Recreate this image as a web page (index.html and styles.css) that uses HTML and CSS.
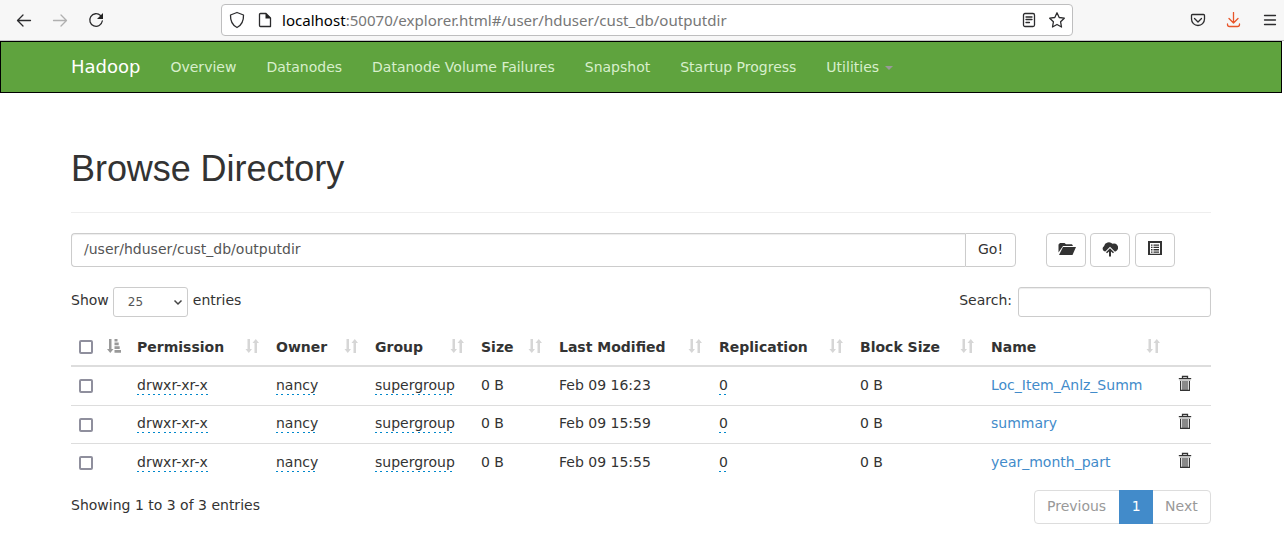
FILE: index.html
```html
<!DOCTYPE html>
<html lang="en">
<head>
<meta charset="utf-8">
<title>Browsing HDFS</title>
<link rel="stylesheet" href="styles.css">
</head>
<body>
<svg class="defs" width="0" height="0">
  <symbol id="sort" viewBox="0 0 14 14"><path d="M2.500 0h2.500v10H7L3.750 14 .5 10h2zM9.500 14h2.500V4h2L10.750 0 7.500 4h2z"/></symbol>
  <symbol id="sort-asc" viewBox="0 0 14 14"><path d="M2 0h2.500v10H6.500L3.250 14 0 10h2zM7.500 0h3v2.500h-3zM7.500 3.600h4.200v2.600H7.500zM7.500 7.300h5.200v2.600H7.500zM7.500 11H14v2.700H7.500z"/></symbol>
  <symbol id="trash" viewBox="0 0 14 16"><path d="M4.500 3V1.500h5V3" fill="none" stroke="currentColor" stroke-width="1.300"/><path d="M.8 3h12.400v1.200H.8z" fill="currentColor"/><path d="M1.500 4.200h11v1.600h-11z" fill="#bbb"/><path d="M2.600 6v9.400h8.800V6M5 6v9M7 6v9M9 6v9" fill="none" stroke="currentColor" stroke-width="1.150"/></symbol>
</svg>

<div class="browser">
  <div class="nav-buttons">
    <svg width="16" height="16" viewBox="0 0 16 16"><path d="M14.500 8.500H2M7 3 1.500 8.500 7 14"/></svg>
    <svg class="dim" width="16" height="16" viewBox="0 0 16 16"><path d="M1.500 8.500h12.500M9 3l5.500 5.500L9 14"/></svg>
    <svg width="16" height="16" viewBox="0 0 16 16"><path d="M12.500 3.500A6.300 6.300 0 1 0 14.300 9"/><path class="solid" d="M15 1v6H9z"/></svg>
  </div>
  <div class="address">
    <svg width="16" height="18" viewBox="0 0 16 18"><path d="M8 1.500 14.500 4C14.700 9 13 14 8 16.500 3 14 1.300 9 1.500 4z"/></svg>
    <svg class="page-icon" width="14" height="16" viewBox="0 0 14 16"><path d="M2.500 1.500H8L12.500 6v8.500h-10a1 1 0 0 1-1-1v-11a1 1 0 0 1 1-1z"/><path class="solid" d="M7.500 1 13 6.500H7.500z"/></svg>
    <div class="url"><span class="host">localhost</span>:50070/explorer.html#/user/hduser/cust_db/outputdir</div>
    <svg class="reader" width="14" height="16" viewBox="0 0 14 16"><rect x="1.500" y="1.500" width="11" height="13" rx="1.500"/><path d="M4 5h6M4 7.500h6M4 10.500h3.500"/></svg>
    <svg width="18" height="18" viewBox="0 0 18 18"><path d="m9 1.800 2.200 4.700 5.100.7-3.700 3.600.9 5.200L9 13.500 4.500 16l.9-5.200L1.700 7.200l5.100-.7z"/></svg>
  </div>
  <div class="tools">
    <svg width="16" height="16" viewBox="0 0 16 16"><path d="M2.500 2.500h11a1 1 0 0 1 1 1V7a6.500 6.500 0 0 1-13 0V3.500a1 1 0 0 1 1-1zM4.500 6.500 8 10l3.500-3.500"/></svg>
    <svg class="download" width="16" height="16" viewBox="0 0 16 16"><path d="M7.500.5v10.500M3 6.500l4.500 4.500L12 6.500M1.500 12v.5a2 2 0 0 0 2 2h8a2 2 0 0 0 2-2V12"/></svg>
    <svg width="14" height="16" viewBox="0 0 14 16"><path d="M1.500 3.500h11M1.500 8h11M1.500 12.500h11"/></svg>
  </div>
</div>

<nav class="navbar">
  <span class="brand">Hadoop</span>
  <a>Overview</a><a>Datanodes</a><a>Datanode Volume Failures</a><a>Snapshot</a><a>Startup Progress</a><a>Utilities <i class="caret"></i></a>
</nav>

<main class="container">
  <h1>Browse Directory</h1>
  <div class="path-row">
    <div class="path">/user/hduser/cust_db/outputdir</div>
    <div class="go">Go!</div>
    <div class="actions">
      <div class="btn folder"><svg width="18" height="14" viewBox="0 0 18 14"><path d="M.5 10.500V2.500L2 1h4.500L8 2.200h6L15 4H5zM1 13 5 5h13l-3.500 8z"/></svg></div>
      <div class="btn"><svg width="16" height="16" viewBox="0 0 16 16"><path d="M3 10.500A2.900 2.900 0 0 1 2 5.200 5 5 0 0 1 10.500 2.800 3.800 3.800 0 0 1 13.500 10.500h-.8L8 5.700 3.300 10.500zM8 7.200l4 4.100-1 1-2-1.900V15.500H7v-5.100l-2 1.900-1-1z"/></svg></div>
      <div class="btn list"><svg width="14" height="14" viewBox="0 0 14 14"><path fill-rule="evenodd" d="M0 0h14v14H0zM2 2v10.700h10V2z"/><path d="M3 3.500h1.500v1.300H3zM5.500 3.500H11v1.300H5.500zM3 5.800h1.500v1.300H3zM5.500 5.800H11v1.300H5.500zM3 8.100h1.500v1.300H3zM5.500 8.100H11v1.300H5.500zM3 10.400h1.500v1.300H3zM5.500 10.400H11v1.300H5.500z"/></svg></div>
    </div>
  </div>

  <div class="filter-row">
    <span>Show</span>
    <div class="select">25<svg width="10" height="8" viewBox="0 0 10 8"><path d="m1.500 2.500 3.500 3.500L8.500 2.500"/></svg></div>
    <span>entries</span>
    <span class="search-label">Search:</span>
    <div class="search"></div>
  </div>

  <table class="files">
    <colgroup><col class="c-check"><col class="c-perm"><col class="c-owner"><col class="c-group"><col class="c-size"><col class="c-mod"><col class="c-rep"><col class="c-block"><col class="c-name"><col class="c-del"></colgroup>
    <thead><tr>
      <th><div class="head"><i class="check"></i><svg class="sorted"><use href="#sort-asc"/></svg></div></th>
      <th><div class="head">Permission<svg><use href="#sort"/></svg></div></th>
      <th><div class="head">Owner<svg><use href="#sort"/></svg></div></th>
      <th><div class="head">Group<svg><use href="#sort"/></svg></div></th>
      <th><div class="head">Size<svg><use href="#sort"/></svg></div></th>
      <th><div class="head">Last Modified<svg><use href="#sort"/></svg></div></th>
      <th><div class="head">Replication<svg><use href="#sort"/></svg></div></th>
      <th><div class="head">Block Size<svg><use href="#sort"/></svg></div></th>
      <th><div class="head">Name<svg><use href="#sort"/></svg></div></th>
      <th></th>
    </tr></thead>
    <tbody>
      <tr><td><i class="check"></i></td><td><span class="edit">drwxr-xr-x</span></td><td><span class="edit">nancy</span></td><td><span class="edit">supergroup</span></td><td>0 B</td><td>Feb 09 16:23</td><td><span class="edit">0</span></td><td>0 B</td><td><a>Loc_Item_Anlz_Summ</a></td><td><svg class="trash"><use href="#trash"/></svg></td></tr>
      <tr class="second"><td><i class="check"></i></td><td><span class="edit">drwxr-xr-x</span></td><td><span class="edit">nancy</span></td><td><span class="edit">supergroup</span></td><td>0 B</td><td>Feb 09 15:59</td><td><span class="edit">0</span></td><td>0 B</td><td><a>summary</a></td><td><svg class="trash"><use href="#trash"/></svg></td></tr>
      <tr><td><i class="check"></i></td><td><span class="edit">drwxr-xr-x</span></td><td><span class="edit">nancy</span></td><td><span class="edit">supergroup</span></td><td>0 B</td><td>Feb 09 15:55</td><td><span class="edit">0</span></td><td>0 B</td><td><a>year_month_part</a></td><td><svg class="trash"><use href="#trash"/></svg></td></tr>
    </tbody>
  </table>

  <div class="footer-row">
    <span>Showing 1 to 3 of 3 entries</span>
    <div class="pager"><span>Previous</span><span class="active">1</span><span>Next</span></div>
  </div>
</main>
</body>
</html>
```
FILE: styles.css
```css
* { box-sizing: border-box; }
body { margin: 0; height: 537px; overflow: hidden; background: #fff; color: #333; font: 14px/20px "DejaVu Sans", sans-serif; }
.defs { position: absolute; }
svg { display: block; flex: none; }

.browser { height: 41px; display: flex; align-items: center; background: #f7f7f7; border-bottom: 1px solid #c4c4c6; }
.browser svg { fill: none; stroke: #2c2c2e; stroke-width: 1.3; stroke-linejoin: round; stroke-linecap: round; }
.browser svg .solid { fill: #222; stroke: none; }
.browser .nav-buttons { display: flex; gap: 20px; width: 221px; padding-left: 16px; }
.browser svg.dim { stroke: #b0b0b0; }
.address { width: 852px; height: 32px; padding: 0 6px 0 7px; display: flex; align-items: center; background: #fff; border: 1px solid #bebebf; border-radius: 4px; }
.page-icon { margin-left: 13px; }
.url { flex: 1; margin-left: 10px; font: 15.07px/20px "Noto Sans", sans-serif; color: #777; white-space: nowrap; }
.host { color: #000; }
.reader { margin-right: 12px; }
.tools { flex: 1; display: flex; justify-content: flex-end; gap: 20px; padding-right: 7px; }
.tools svg:nth-child(2) { margin-right: 1px; }
.browser svg.download { stroke: #e8562a; }

.navbar { width: 1282px; height: 52px; padding-left: 70px; display: flex; align-items: center; gap: 30px; background: #5fa33e; border: 1px solid #000; color: #d8efcc; }
.brand { font-size: 18px; color: #fff; }
.caret { display: inline-block; margin-left: 1px; border: 4px solid transparent; border-top-color: #999; border-bottom: 0; vertical-align: middle; }

.container { width: 1140px; margin-left: 71px; }
h1 { margin: 0; height: 120px; padding-top: 56px; border-bottom: 1px solid #eee; font: 36px/40px "Liberation Sans", sans-serif; letter-spacing: -.06px; }
.path-row { display: flex; height: 34px; margin-top: 20px; }
.path { width: 894px; padding: 5px 12px; border: 1px solid #ccc; border-right: 0; border-radius: 4px 0 0 4px; color: #555; box-shadow: inset 0 1px 1px rgba(0,0,0,.075); }
.go { width: 51px; padding: 5px 0; text-align: center; border: 1px solid #ccc; border-radius: 0 4px 4px 0; }
.actions { display: flex; gap: 4px; margin-left: 30px; }
.btn { width: 40px; display: flex; align-items: center; justify-content: center; border: 1px solid #ccc; border-radius: 4px; padding-bottom: 2px; fill: #333; }
.folder { padding-left: 2px; }
.list { margin-left: 1px; padding-bottom: 4px; }

.filter-row { display: flex; height: 30px; margin-top: 20px; line-height: 26px; }
.select { width: 75px; margin: 0 5px 0 4px; padding: 0 4px 0 14px; display: flex; align-items: center; justify-content: space-between; font-size: 12px; color: #555; border: 1px solid #ccc; border-radius: 3px; }
.select svg { fill: none; stroke: #444; stroke-width: 1.5; }
.search-label { margin-left: auto; }
.search { width: 193px; margin-left: 6px; border: 1px solid #ccc; border-radius: 3px; box-shadow: inset 0 1px 1px rgba(0,0,0,.075); }

.files { width: 1140px; margin-top: 12px; table-layout: fixed; border-collapse: separate; border-spacing: 0; }
.c-check { width: 58px; } .c-perm { width: 139px; } .c-owner { width: 99px; } .c-group { width: 106px; } .c-size { width: 78px; }
.c-mod { width: 160px; } .c-rep { width: 141px; } .c-block { width: 131px; } .c-name { width: 186px; } .c-del { width: 42px; }
th { height: 38px; padding: 0 8px; text-align: left; border-bottom: 2px solid #ddd; white-space: nowrap; }
.head { display: flex; align-items: center; justify-content: space-between; }
.head svg { width: 14px; height: 14px; fill: #d6d6d6; margin: -2px 1px 0 0; }
.head .sorted { fill: #999; margin-right: 0; }
td { height: 38px; padding: 8px 8px 0; vertical-align: top; white-space: nowrap; }
tbody tr + tr td { border-top: 1px solid #ddd; }
.second td { padding-top: 7px; }
.check { display: block; width: 14px; height: 14px; border: 2px solid #8f8f9d; border-radius: 2px; background: #fff; }
td .check { margin-top: 4px; }
.second .check { margin-top: 5px; }
.edit { display: inline-block; height: 20px; background: repeating-linear-gradient(90deg, #08c 0 2px, transparent 2px 5.33px) 0 100% / 100% 1px no-repeat; vertical-align: top; }
td a { color: #428bca; }
.trash { width: 14px; height: 16px; color: #333; margin: 0 0 0 .5px; }

.footer-row { display: flex; justify-content: space-between; margin-top: 9px; line-height: 30px; }
.pager { display: flex; width: 177px; height: 34px; line-height: 31px; color: #999; border: 1px solid #ddd; border-radius: 4px; }
.pager span { padding: 0 12px; }
.pager .active { margin: -1px 0 -1px 1px; line-height: 33px; background: #428bca; color: #fff; padding: 0 12.5px; }
```
